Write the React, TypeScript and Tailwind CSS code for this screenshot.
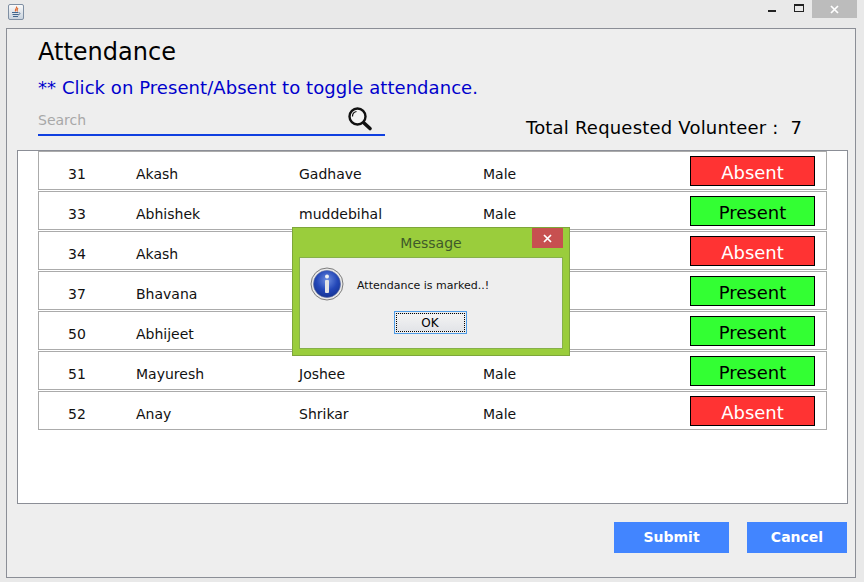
import React from 'react';

type Volunteer = { id: number; first: string; last: string; gender: string; present: boolean };

// last name and gender of rows 34, 37 and 50 sit behind the dialog
const volunteers: Volunteer[] = [
  { id: 31, first: 'Akash', last: 'Gadhave', gender: 'Male', present: false },
  { id: 33, first: 'Abhishek', last: 'muddebihal', gender: 'Male', present: true },
  { id: 34, first: 'Akash', last: '', gender: '', present: false },
  { id: 37, first: 'Bhavana', last: '', gender: '', present: true },
  { id: 50, first: 'Abhijeet', last: '', gender: '', present: true },
  { id: 51, first: 'Mayuresh', last: 'Joshee', gender: 'Male', present: true },
  { id: 52, first: 'Anay', last: 'Shrikar', gender: 'Male', present: false },
];

function JavaIcon() {
  return (
    <div className="w-[16px] h-[16px] rounded-[2px] border border-[#7f8fa3] bg-gradient-to-b from-[#fafafa] to-[#c9d3de] flex items-center justify-center">
      <svg width="12" height="12" viewBox="0 0 12 12" fill="none">
        <path d="M6.5 0.5C7.5 2 4.5 3 5.5 5.5M8 2C7 3 6.5 4 7.5 5.5" stroke="#e0662a" strokeWidth="1.1" />
        <path d="M2 6.5h6M2.5 8.5h6M3 10.5h5" stroke="#40648c" strokeWidth="1" />
        <path d="M8.5 6.5c2 0 2 2-0.5 2.5" stroke="#40648c" strokeWidth="0.8" />
      </svg>
    </div>
  );
}

function SearchIcon() {
  return (
    <svg width="26" height="26" viewBox="0 0 26 26" fill="none">
      <circle cx="10.5" cy="10.5" r="8" fill="#f4f4f4" stroke="#111" strokeWidth="2.4" />
      <path d="M5.5 10.5a5 5 0 0 1 4-5" stroke="#111" strokeWidth="1.2" />
      <path d="M17 17l6 5.5" stroke="#111" strokeWidth="3.6" strokeLinecap="round" />
    </svg>
  );
}

function InfoIcon() {
  return (
    <svg width="34" height="34" viewBox="0 0 34 34">
      <defs>
        <radialGradient id="infoBlue" cx="50%" cy="35%" r="70%">
          <stop offset="0%" stopColor="#6f8fe0" />
          <stop offset="55%" stopColor="#2347b8" />
          <stop offset="100%" stopColor="#12308f" />
        </radialGradient>
      </defs>
      <circle cx="17" cy="17" r="16" fill="#e8e8e8" stroke="#7c7c7c" strokeWidth="1" />
      <circle cx="17" cy="17" r="13.5" fill="url(#infoBlue)" stroke="#5a6aa0" strokeWidth="0.6" />
      <circle cx="17" cy="9.5" r="2" fill="#f2f2f2" />
      <rect x="15" y="13" width="4" height="13" rx="1" fill="#e4e4e4" />
    </svg>
  );
}

function Row({ v }: { v: Volunteer }) {
  return (
    <div className="h-[39px] box-border border border-[#ababab] flex items-center text-[14px] text-[#111]">
      <span className="ml-[29px] w-[68px] pt-[7px]">{v.id}</span>
      <span className="w-[163px] pt-[7px]">{v.first}</span>
      <span className="w-[184px] pt-[7px]">{v.last}</span>
      <span className="w-[207px] pt-[7px]">{v.gender}</span>
      <button
        className={`w-[125px] h-[30px] border border-black text-[18px] leading-none pt-[5px] ${
          v.present ? 'bg-[#33ff33] text-black' : 'bg-[#ff3333] text-white'
        }`}
      >
        {v.present ? 'Present' : 'Absent'}
      </button>
    </div>
  );
}

function MessageDialog() {
  return (
    <div className="absolute left-[292px] top-[227px] w-[278px] h-[129px] box-border border border-[#7ea63a] bg-[#9acd3c] flex flex-col">
      <div className="relative h-[29px] flex items-center justify-center text-[14px] text-[#3f5a2a] pt-[2px]">
        Message
        <div className="absolute right-[6px] top-0 w-[31px] h-[20px] bg-[#c75050] flex items-center justify-center">
          <svg width="9" height="9" viewBox="0 0 9 9">
            <path d="M1 1l7 7M8 1L1 8" stroke="#fff" strokeWidth="1.7" />
          </svg>
        </div>
      </div>
      <div className="mx-[6px] h-[92px] box-border border border-[#86b04a] bg-[#eeeeee] flex flex-col">
        <div className="flex items-center pl-[10px] pt-[9px]">
          <InfoIcon />
          <span className="ml-[13px] pt-[4px] text-[11px] text-[#111]">Attendance is marked..!</span>
        </div>
        <div className="flex justify-center mt-[10px] pr-[2px]">
          <div className="w-[73px] h-[23px] box-border border border-[#4d9be6] p-px">
            <div className="h-full border border-dotted border-black bg-gradient-to-b from-[#f3f3f3] to-[#e2e4e8] flex items-center justify-center text-[12px] text-black">
              OK
            </div>
          </div>
        </div>
      </div>
    </div>
  );
}

export default function App() {
  return (
    <div className="relative w-[864px] h-[582px] overflow-hidden bg-[#e9e9e9] flex flex-col font-['DejaVu_Sans','Liberation_Sans',sans-serif]">
      {/* Title bar */}
      <div className="h-[28px] flex items-start">
        <div className="ml-[8px] mt-[4px]">
          <JavaIcon />
        </div>
        <div className="ml-auto flex items-start mr-[7px]">
          <div className="w-[8px] h-[2px] mt-[10px] mr-[18px] bg-[#222]" />
          <div className="w-[10px] h-[8px] mt-[4px] mr-[8px] border border-t-2 border-[#222]" />
          <div className="w-[45px] h-[18px] bg-[#bcbcbc] flex items-center justify-center">
            <svg width="9" height="9" viewBox="0 0 9 9">
              <path d="M1 1l7 7M8 1L1 8" stroke="#fff" strokeWidth="1.7" />
            </svg>
          </div>
        </div>
      </div>

      {/* Window */}
      <div className="ml-[6px] w-[850px] h-[550px] box-border border border-[#8b8e96] bg-[#eeeeee] flex flex-col">
        <div className="pl-[31px] pt-[8px]">
          <h1 className="text-[24px] leading-[30px] text-black">Attendance</h1>
          <p className="mt-[9px] text-[18px] leading-[24px] tracking-[0.06px] text-[#0000cc]">
            ** Click on Present/Absent to toggle attendance.
          </p>
        </div>

        <div className="flex items-start pl-[31px] mt-[4px]">
          <div className="w-[347px] h-[32px] box-border border-b-2 border-[#0f3fe0] flex items-center justify-between">
            <span className="pt-[2px] text-[14px] text-[#a8a8a8]">Search</span>
            <div className="mr-[12px] mb-[1px]">
              <SearchIcon />
            </div>
          </div>
          <div className="ml-[141px] mt-[12px] text-[18px] leading-[24px] tracking-[0.2px] text-black whitespace-pre">
            Total Requested Volunteer :  7
          </div>
        </div>

        {/* List */}
        <div className="ml-[10px] mt-[10px] w-[831px] h-[354px] box-border border border-[#8b8e96] bg-white pl-[20px] flex flex-col gap-px">
          {volunteers.map(v => (
            <div key={v.id} className="w-[789px]">
              <Row v={v} />
            </div>
          ))}
        </div>

        <div className="flex justify-end mt-[18px] mr-[8px] gap-[18px]">
          <button className="w-[115px] h-[31px] bg-[#4285ff] text-white font-bold text-[14px]">Submit</button>
          <button className="w-[100px] h-[31px] bg-[#4285ff] text-white font-bold text-[14px]">Cancel</button>
        </div>
      </div>

      <MessageDialog />
    </div>
  );
}
